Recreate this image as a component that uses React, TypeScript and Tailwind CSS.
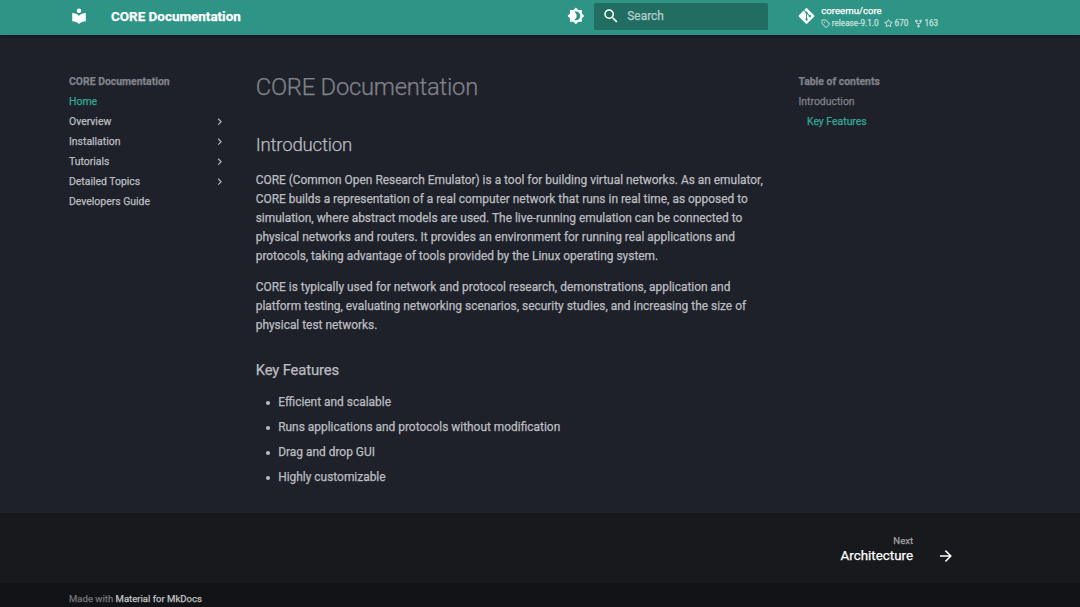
import type { ReactNode } from "react";
import { FaGitAlt } from "react-icons/fa";

const NAV = [
  { label: "Home", active: true },
  { label: "Overview", nested: true },
  { label: "Installation", nested: true },
  { label: "Tutorials", nested: true },
  { label: "Detailed Topics", nested: true },
  { label: "Developers Guide" },
];

const FEATURES = [
  "Efficient and scalable",
  "Runs applications and protocols without modification",
  "Drag and drop GUI",
  "Highly customizable",
];

const ICONS = {
  library:
    "M12 8a3 3 0 0 0 3-3 3 3 0 0 0-3-3 3 3 0 0 0-3 3 3 3 0 0 0 3 3m0 3.54C9.64 9.35 6.5 8 3 8v11c3.5 0 6.64 1.35 9 3.54 2.36-2.19 5.5-3.54 9-3.54V8c-3.5 0-6.64 1.35-9 3.54Z",
  brightness:
    "M12 18c-.89 0-1.74-.2-2.5-.55C11.56 16.5 13 14.42 13 12s-1.44-4.5-3.5-5.45C10.26 6.2 11.11 6 12 6a6 6 0 0 1 6 6 6 6 0 0 1-6 6m8-9.31V4h-4.69L12 .69 8.69 4H4v4.69L.69 12 4 15.31V20h4.69L12 23.31 15.31 20H20v-4.69L23.31 12 20 8.69Z",
  magnify:
    "M9.5 3A6.5 6.5 0 0 1 16 9.5c0 1.61-.59 3.09-1.56 4.23l.27.27h.79l5 5-1.5 1.5-5-5v-.79l-.27-.27A6.516 6.516 0 0 1 9.5 16 6.5 6.5 0 0 1 3 9.5 6.5 6.5 0 0 1 9.5 3m0 2C7 5 5 7 5 9.5S7 14 9.5 14 14 12 14 9.5 12 5 9.5 5Z",
  chevron: "M8.59 16.58 13.17 12 8.59 7.41 10 6l6 6-6 6-1.41-1.42Z",
  arrow: "M4 11v2h12l-5.5 5.5 1.42 1.42L19.84 12l-7.92-7.92L10.5 5.5 16 11H4Z",
  tag: "M1 7.775V2.75C1 1.784 1.784 1 2.75 1h5.025c.464 0 .91.184 1.238.513l6.25 6.25a1.75 1.75 0 0 1 0 2.474l-5.026 5.026a1.75 1.75 0 0 1-2.474 0l-6.25-6.25A1.752 1.752 0 0 1 1 7.775Zm1.5 0c0 .066.026.13.073.177l6.25 6.25a.25.25 0 0 0 .354 0l5.025-5.025a.25.25 0 0 0 0-.354l-6.25-6.25a.25.25 0 0 0-.177-.073H2.75a.25.25 0 0 0-.25.25ZM6 5a1 1 0 1 1 0 2 1 1 0 0 1 0-2Z",
  star: "M8 .25a.75.75 0 0 1 .673.418l1.882 3.815 4.21.612a.75.75 0 0 1 .416 1.279l-3.046 2.97.719 4.192a.751.751 0 0 1-1.088.791L8 12.347l-3.766 1.98a.75.75 0 0 1-1.088-.79l.72-4.194L.818 6.374a.75.75 0 0 1 .416-1.28l4.21-.611L7.327.668A.75.75 0 0 1 8 .25Zm0 2.445L6.615 5.5a.75.75 0 0 1-.564.41l-3.097.45 2.24 2.184a.75.75 0 0 1 .216.664l-.528 3.084 2.769-1.456a.75.75 0 0 1 .698 0l2.77 1.456-.53-3.084a.75.75 0 0 1 .216-.664l2.24-2.183-3.096-.45a.75.75 0 0 1-.564-.41L8 2.694Z",
  fork: "M5 5.372v.878c0 .414.336.75.75.75h4.5a.75.75 0 0 0 .75-.75v-.878a2.25 2.25 0 1 1 1.5 0v.878a2.25 2.25 0 0 1-2.25 2.25h-1.5v2.128a2.251 2.251 0 1 1-1.5 0V8.5h-1.5A2.25 2.25 0 0 1 3.5 6.25v-.878a2.25 2.25 0 1 1 1.5 0ZM5 3.25a.75.75 0 1 0-1.5 0 .75.75 0 0 0 1.5 0Zm6.75.75a.75.75 0 1 0 0-1.5.75.75 0 0 0 0 1.5Zm-3 8.75a.75.75 0 1 0-1.5 0 .75.75 0 0 0 1.5 0Z",
};

function Icon({ name, className, size = 24 }: { name: keyof typeof ICONS; className: string; size?: number }) {
  return (
    <svg className={`shrink-0 fill-current ${className}`} viewBox={`0 0 ${size} ${size}`}>
      <path d={ICONS[name]} />
    </svg>
  );
}

function Fact({ icon, children }: { icon: "tag" | "star" | "fork"; children: ReactNode }) {
  return (
    <li className="flex items-center gap-[1.5px]">
      <Icon name={icon} size={16} className="size-[9px]" />
      {children}
    </li>
  );
}

function Header() {
  return (
    <header className="flex h-[34.5px] items-center bg-[#2e9485] pb-[2px] pl-[69.5px] text-white shadow-[0_0_3px_rgba(0,0,0,0.25),0_2px_4px_rgba(0,0,0,0.2)]">
      <Icon name="library" className="size-[18px]" />
      <div className="ml-[23.5px] w-[457px] pt-[1.5px] text-[13.45px] font-bold">CORE Documentation</div>
      <Icon name="brightness" className="-ml-[1px] size-[17.8px]" />
      <div className="ml-[9.5px] flex h-[27px] w-[174px] items-center rounded-[1.5px] bg-[#226d62] pl-[7.5px]">
        <Icon name="magnify" className="size-[18px]" />
        <span className="ml-[7.5px] pt-[1.5px] text-[11.92px] text-[#b2cfcb]">Search</span>
      </div>
      <a className="ml-[30px] flex items-center">
        <FaGitAlt className="h-[18px] w-[17px]" />
        <div className="ml-[6px] pt-[1.5px] text-[9.65px] leading-[12px]">
          <div>coreemu/core</div>
          <ul className="flex gap-[5.5px] text-[8.2px] text-[#c3e0dc]">
            <Fact icon="tag">release-9.1.0</Fact>
            <Fact icon="star">670</Fact>
            <Fact icon="fork">163</Fact>
          </ul>
        </div>
      </a>
    </header>
  );
}

function Sidebar() {
  return (
    <nav className="w-[186.7px] shrink-0 pt-[37.3px] pr-[29.4px] text-[10.43px] leading-[20.1px] text-[#bcbdc0]">
      <div className="font-bold text-[#80828a]">CORE Documentation</div>
      {NAV.map((item) => (
        <a key={item.label} className={`flex items-center justify-between ${item.active ? "text-[#33a897]" : ""}`}>
          {item.label}
          {item.nested && <Icon name="chevron" className="mb-[1.5px] size-[13.4px]" />}
        </a>
      ))}
    </nav>
  );
}

function Article() {
  return (
    <article className="w-[542.8px] shrink-0 text-[11.93px] leading-[19px] text-[#bcbdc0]">
      <h1 className="pt-[37.3px] text-[23.8px] leading-[31px] font-light tracking-[-0.01em] text-[#80828a]">
        CORE Documentation
      </h1>
      <h2 className="mt-[29.3px] text-[18.6px] leading-[26px] font-light tracking-[-0.01em]">Introduction</h2>
      <p className="mt-[12.9px]">
        CORE (Common Open Research Emulator) is a tool for building virtual networks. As an emulator,
        <br />
        CORE builds a representation of a real computer network that runs in real time, as opposed to
        <br />
        simulation, where abstract models are used. The live-running emulation can be connected to
        <br />
        physical networks and routers. It provides an environment for running real applications and
        <br />
        protocols, taking advantage of tools provided by the Linux operating system.
      </p>
      <p className="mt-[12px]">
        CORE is typically used for network and protocol research, demonstrations, application and
        <br />
        platform testing, evaluating networking scenarios, security studies, and increasing the size of
        <br />
        physical test networks.
      </p>
      <h3 className="mt-[24px] text-[14.84px] leading-[22px] tracking-[-0.01em]">Key Features</h3>
      <ul className="mt-[11.8px] ml-[10.5px] flex flex-col gap-[6px]">
        {FEATURES.map((feature) => (
          <li
            key={feature}
            className="flex items-center gap-[8px] before:mt-[2px] before:size-[4px] before:rounded-full before:bg-current"
          >
            {feature}
          </li>
        ))}
      </ul>
    </article>
  );
}

function TableOfContents() {
  return (
    <nav className="pt-[37.3px] text-[10.43px] leading-[20.1px] text-[#80828a]">
      <div className="font-bold">Table of contents</div>
      <div>Introduction</div>
      <div className="pl-[8.5px] text-[#33a897]">Key Features</div>
    </nav>
  );
}

function Footer() {
  return (
    <footer>
      <div className="flex h-[69.5px] items-center justify-end bg-[#18191d] pt-[2.5px] pr-[125px] text-white">
        <div className="text-right">
          <div className="text-[9.5px] leading-[13px] text-[#a2a3a5]">Next</div>
          <div className="text-[13.36px] leading-[17px]">Architecture</div>
        </div>
        <Icon name="arrow" className="mt-[14px] ml-[24px] size-[18px]" />
      </div>
      <div className="h-[25px] bg-[#121316] pt-[8px] pl-[69px] text-[9.55px] leading-[15px] text-[#747578]">
        Made with <span className="text-[#c2c3c4]">Material for MkDocs</span>
      </div>
    </footer>
  );
}

export default function App() {
  return (
    <div className="h-[607px] w-[1080px] overflow-hidden bg-[#1e2129] font-['Roboto',sans-serif] [-webkit-text-stroke:0.25px]">
      <Header />
      <main className="flex h-[478.5px] pl-[69px]">
        <Sidebar />
        <Article />
        <TableOfContents />
      </main>
      <Footer />
    </div>
  );
}
